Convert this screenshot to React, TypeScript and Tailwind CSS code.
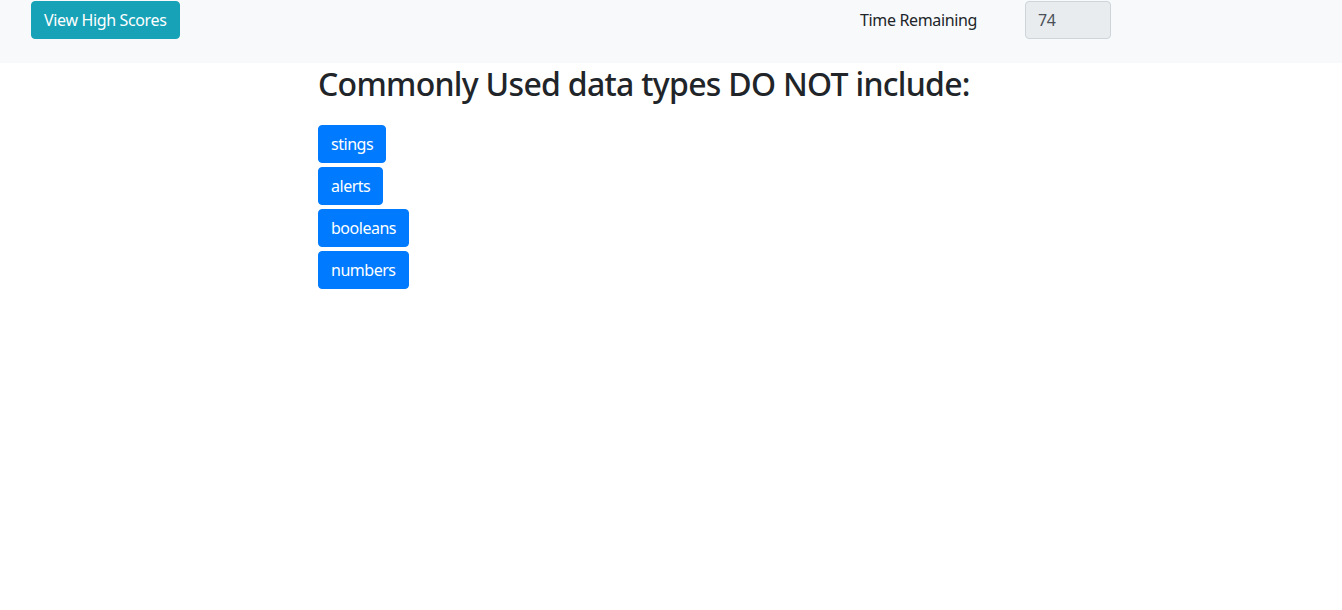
const answers = ['stings', 'alerts', 'booleans', 'numbers']

const FONT = "font-['Segoe_UI','Noto_Sans',sans-serif] tracking-[-0.022em]"

export default function App() {
  return (
    <div className={`min-h-screen bg-white text-[#212529] ${FONT}`}>
      <header className="h-[63px] bg-[#f8f9fa] flex items-start pt-px">
        <button className="ml-[31px] h-[38px] px-3 rounded-[4px] bg-[#17a2b8] border border-[#17a2b8] text-white text-base leading-6">
          View High Scores
        </button>
        <div className="ml-auto mr-[231px] flex items-center h-[38px]">
          <span className="text-base">Time Remaining</span>
          <input
            readOnly
            value="74"
            className="ml-[48px] w-[86px] h-[38px] px-3 rounded-[4px] bg-[#e9ecef] border border-[#ced4da] text-[#495057] text-base outline-none"
          />
        </div>
      </header>

      <main className="pl-[318px] pt-[2px]">
        <h2 className="text-[32px] font-medium tracking-[-0.022em] leading-[1.2] mb-[22px]">
          Commonly Used data types DO NOT include:
        </h2>
        <div className="flex flex-col items-start gap-1">
          {answers.map((a) => (
            <button
              key={a}
              className="h-[38px] px-3 rounded-[4px] bg-[#007bff] border border-[#007bff] text-white text-base tracking-[-0.03em] leading-6"
            >
              {a}
            </button>
          ))}
        </div>
      </main>
    </div>
  )
}
